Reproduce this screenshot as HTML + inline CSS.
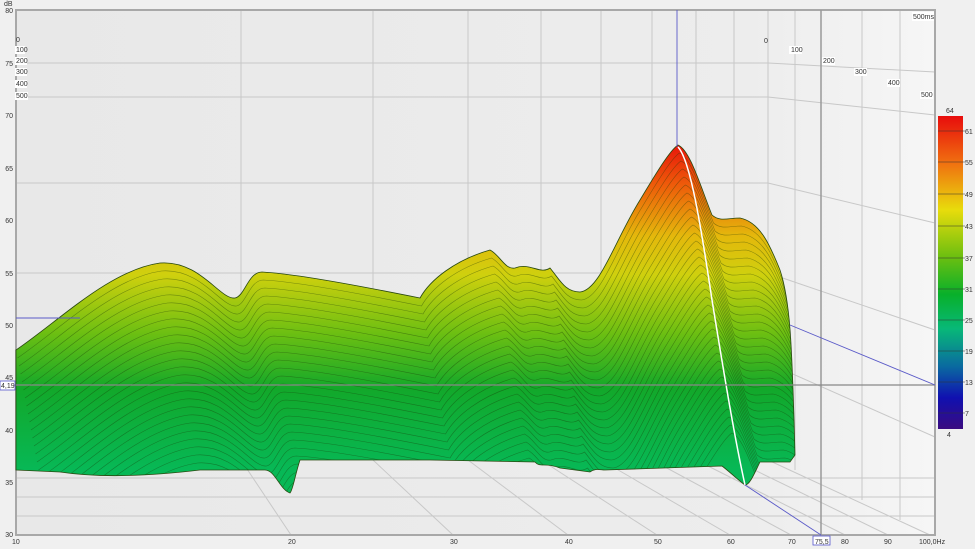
<!DOCTYPE html>
<html><head><meta charset="utf-8"><style>
html,body{margin:0;padding:0;background:#f0f0f0;width:975px;height:549px;overflow:hidden;font-family:"Liberation Sans",sans-serif}
svg{display:block;position:absolute;left:0;top:0}
text{font-family:"Liberation Sans",sans-serif;font-size:7px;fill:#333}
</style></head><body>
<svg width="975" height="549" viewBox="0 0 975 549">
<defs>
<linearGradient id="g" x1="0" y1="145" x2="0" y2="470" gradientUnits="userSpaceOnUse">
<stop offset="0" stop-color="#e8160a"/>
<stop offset="0.12" stop-color="#ee5a0a"/>
<stop offset="0.28" stop-color="#e4b80c"/>
<stop offset="0.4" stop-color="#cfd00e"/>
<stop offset="0.58" stop-color="#6cbf12"/>
<stop offset="0.75" stop-color="#12a82a"/>
<stop offset="1" stop-color="#07b856"/>
</linearGradient>
<linearGradient id="cb" x1="0" y1="0" x2="0" y2="1">
<stop offset="0" stop-color="#e80c0c"/>
<stop offset="0.15" stop-color="#f07010"/>
<stop offset="0.3" stop-color="#e8dc0c"/>
<stop offset="0.45" stop-color="#6cbf10"/>
<stop offset="0.57" stop-color="#08b02a"/>
<stop offset="0.68" stop-color="#08b878"/>
<stop offset="0.8" stop-color="#0a6aa0"/>
<stop offset="0.9" stop-color="#1010b0"/>
<stop offset="1" stop-color="#3a0c80"/>
</linearGradient>
<linearGradient id="bg" x1="0" y1="0" x2="1" y2="0">
<stop offset="0" stop-color="#e8e8e8"/><stop offset="0.8" stop-color="#ededed"/><stop offset="1" stop-color="#f6f6f6"/>
</linearGradient>
<clipPath id="c"><path id="shape" d="M16,350 C60,320 110,270 160,263 C200,260 220,300 235,298 C245,296 248,272 262,272 C300,274 380,290 420,298 C430,280 455,260 490,250 C500,255 505,270 515,268 C530,262 540,275 550,268 C560,280 565,292 580,292 C600,290 615,240 640,200 C655,175 670,150 678,145 C690,150 700,185 712,215 C720,222 728,218 740,218 C760,222 770,245 780,270 C790,300 792,340 795,455 L790,462 L760,462 C755,472 750,485 745,485 C738,480 730,472 722,466 L605,470 C600,470 595,468 590,472 L560,468 C545,462 540,468 535,462 L430,460 L300,460 C295,475 293,490 290,493 C280,490 275,470 265,470 L200,470 C150,476 100,478 60,472 L16,470 Z"/></clipPath>
</defs>
<rect x="0" y="0" width="975" height="549" fill="#f0f0f0"/>
<rect x="16" y="10" width="919" height="525" fill="url(#bg)"/>
<g stroke="#c8c8c8" stroke-width="1" fill="none">
<path d="M16,63H768L935,72"/><path d="M16,97H768L935,115"/><path d="M16,183H768L935,223"/><path d="M16,273H768L935,330"/>
<path d="M16,363H768L935,437"/><path d="M16,478H935"/><path d="M16,497H935"/><path d="M16,516H935"/>
<path d="M768,10V460"/><path d="M241,10V460"/><path d="M373,10V460"/><path d="M468,10V460"/><path d="M541,10V460"/><path d="M601,10V460"/><path d="M652,10V460"/><path d="M696,10V460"/><path d="M734,10V460"/>
<path d="M795,10V470"/><path d="M862,10V500"/><path d="M900,10V520"/>
<path d="M241,460L291,535"/><path d="M373,460L453,535"/><path d="M468,460L568,535"/><path d="M541,460L657,535"/><path d="M601,460L730,535"/><path d="M652,460L791,535"/><path d="M696,460L845,535"/><path d="M734,460L888,535"/><path d="M768,460L930,535"/>
</g>
<rect x="16" y="10" width="919" height="525" fill="none" stroke="#a8a8a8" stroke-width="2"/>
<line x1="821" y1="10" x2="821" y2="535" stroke="#999" stroke-width="1.5"/>
<use href="#shape" fill="url(#g)"/>
<g clip-path="url(#c)" fill="none" stroke="#1a3a08" stroke-opacity="0.45" stroke-width="0.6">
<path id="r" d="M16,350 C60,320 110,270 160,263 C200,260 220,300 235,298 C245,296 248,272 262,272 C300,274 380,290 420,298 C430,280 455,260 490,250 C500,255 505,270 515,268 C530,262 540,275 550,268 C560,280 565,292 580,292 C600,290 615,240 640,200 C655,175 670,150 678,145 C690,150 700,185 712,215 C720,222 728,218 740,218 C760,222 770,245 780,270 C790,300 792,340 800,455"/>
<use href="#r" transform="translate(1.5,8)"/><use href="#r" transform="translate(3,16)"/><use href="#r" transform="translate(4.5,24)"/><use href="#r" transform="translate(6,32)"/><use href="#r" transform="translate(7.5,40)"/><use href="#r" transform="translate(9,48)"/><use href="#r" transform="translate(10.5,56)"/><use href="#r" transform="translate(12,64)"/><use href="#r" transform="translate(13.5,72)"/><use href="#r" transform="translate(15,80)"/><use href="#r" transform="translate(16.5,88)"/><use href="#r" transform="translate(18,96)"/><use href="#r" transform="translate(19.5,104)"/><use href="#r" transform="translate(21,112)"/><use href="#r" transform="translate(22.5,120)"/><use href="#r" transform="translate(24,128)"/><use href="#r" transform="translate(25.5,136)"/><use href="#r" transform="translate(27,144)"/><use href="#r" transform="translate(28.5,152)"/><use href="#r" transform="translate(30,160)"/><use href="#r" transform="translate(31.5,168)"/><use href="#r" transform="translate(33,176)"/><use href="#r" transform="translate(34.5,184)"/><use href="#r" transform="translate(36,192)"/><use href="#r" transform="translate(37.5,200)"/><use href="#r" transform="translate(39,208)"/><use href="#r" transform="translate(40.5,216)"/><use href="#r" transform="translate(42,224)"/><use href="#r" transform="translate(43.5,232)"/><use href="#r" transform="translate(45,240)"/><use href="#r" transform="translate(46.5,248)"/><use href="#r" transform="translate(48,256)"/><use href="#r" transform="translate(49.5,264)"/><use href="#r" transform="translate(51,272)"/><use href="#r" transform="translate(52.5,280)"/><use href="#r" transform="translate(54,288)"/>
</g>
<use href="#shape" fill="none" stroke="#2a4a10" stroke-width="0.8"/>
<path d="M678,147 C690,160 700,220 712,300 C725,380 735,440 745,485" fill="none" stroke="#fff" stroke-width="1.5"/>
<line x1="16" y1="385" x2="935" y2="385" stroke="#888" stroke-width="1.2"/>
<g stroke="#5a5ac8" stroke-width="0.9" fill="none">
<path d="M677,10V147"/><path d="M16,318H80"/><path d="M790,325L935,385"/><path d="M745,485L821,535"/>
</g>
<text x="4" y="6">dB</text>
<g text-anchor="end"><text x="13" y="13">80</text><text x="13" y="66">75</text><text x="13" y="118">70</text><text x="13" y="171">65</text><text x="13" y="223">60</text><text x="13" y="276">55</text><text x="13" y="328">50</text><text x="13" y="380">45</text><text x="13" y="433">40</text><text x="13" y="485">35</text><text x="13" y="537">30</text></g>
<rect x="0" y="381" width="15" height="9" fill="#fff" stroke="#55c" stroke-width="0.8"/><text x="1" y="388" fill="#33a">4,19</text>
<g font-size="6"><text x="16" y="42">0</text>
<rect x="15" y="46" width="10" height="8" fill="#fff"/><text x="16" y="52">100</text>
<rect x="15" y="57" width="12" height="8" fill="#fff"/><text x="16" y="63">200</text>
<rect x="15" y="68" width="12" height="8" fill="#fff"/><text x="16" y="74">300</text>
<rect x="15" y="80" width="12" height="8" fill="#fff"/><text x="16" y="86">400</text>
<rect x="15" y="92" width="13" height="8" fill="#fff"/><text x="16" y="98">500</text>
<text x="764" y="43">0</text>
<rect x="789" y="46" width="13" height="8" fill="#fff"/><text x="791" y="52">100</text>
<rect x="822" y="57" width="13" height="8" fill="#fff"/><text x="823" y="63">200</text>
<rect x="854" y="68" width="13" height="8" fill="#fff"/><text x="855" y="74">300</text>
<rect x="887" y="79" width="13" height="8" fill="#fff"/><text x="888" y="85">400</text>
<rect x="920" y="91" width="13" height="8" fill="#fff"/><text x="921" y="97">500</text>
<rect x="912" y="12" width="22" height="9" fill="#fff"/><text x="913" y="19">500ms</text></g>
<g font-size="7"><text x="12" y="544">10</text><text x="288" y="544">20</text><text x="450" y="544">30</text><text x="565" y="544">40</text><text x="654" y="544">50</text><text x="727" y="544">60</text><text x="788" y="544">70</text>
<rect x="813" y="536" width="17" height="9" fill="#fff" stroke="#55c" stroke-width="0.8"/><text x="815" y="544" fill="#33a">75,5</text>
<text x="841" y="544">80</text><text x="884" y="544">90</text><text x="919" y="544">100,0Hz</text></g>
<rect x="938" y="116" width="25" height="313" fill="url(#cb)"/>
<g stroke="#333" stroke-width="0.6"><path d="M938,131H965M938,162H965M938,194H965M938,226H965M938,258H965M938,289H965M938,320H965M938,351H965M938,382H965M938,413H965"/></g>
<g font-size="7"><text x="946" y="113">64</text><text x="965" y="134">61</text><text x="965" y="165">55</text><text x="965" y="197">49</text><text x="965" y="229">43</text><text x="965" y="261">37</text><text x="965" y="292">31</text><text x="965" y="323">25</text><text x="965" y="354">19</text><text x="965" y="385">13</text><text x="965" y="416">7</text><text x="947" y="437">4</text></g>
</svg>
</body></html>
